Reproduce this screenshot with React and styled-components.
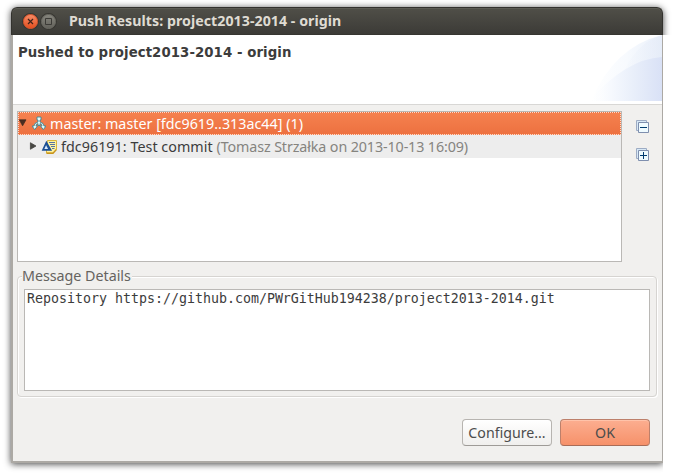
import React from 'react';
import styled, { createGlobalStyle } from 'styled-components';

const ui = '"Noto Sans", "Open Sans", sans-serif';

const GlobalStyle = createGlobalStyle`
  *, *::before, *::after { box-sizing: border-box; }
  html, body { margin: 0; background: #fff; overflow: hidden; }
`;

const Desktop = styled.div`
  width: 679px;
  height: 474px;
  padding: 7px 16px 11px 11px;
  overflow: hidden;
  background: #fff;
`;

const Window = styled.main`
  height: 456px;
  width: 652px;
  display: flex;
  flex-direction: column;
  border-radius: 6px 6px 0 0;
  box-shadow: 0 1px 7px rgba(0, 0, 0, 0.75);
  clip-path: polygon(-11px -7px, 668px -7px, 668px 28px, 652px 28px, 652px 467px, -11px 467px);
`;

const TitleBar = styled.header`
  height: 28px;
  flex: none;
  display: flex;
  align-items: center;
  padding-left: 11px;
  border: 1px solid #33322e;
  border-bottom-color: #373631;
  border-radius: 6px 6px 0 0;
  background: linear-gradient(#504f48, #3c3b37);
  box-shadow: inset 0 1px 0 #5c5b54;
`;

const WindowButton = styled.span`
  display: flex;
  width: 15px;
  height: 15px;
  margin-right: 3px;
  border-radius: 50%;
  border: 1px solid ${(p) => (p.$close ? '#e2572c' : '#6b6a63')};
  background: ${(p) => (p.$close ? 'linear-gradient(#f58a66, #e4501f)' : 'linear-gradient(#85847c, #64635c)')};
  box-shadow: 0 0 0 1px #383732;
  svg { display: block; }
`;

const Title = styled.h1`
  margin: 0 0 0 10px;
  font: 700 14.2px/20px ${ui};
  letter-spacing: 0.04px;
  color: #dfdbd2;
  white-space: nowrap;
`;

const Content = styled.div`
  flex: 1;
  display: flex;
  flex-direction: column;
  border: solid #aca9a4;
  border-width: 0 1px 2px 2px;
  background: #f1f0ee;
`;

const Banner = styled.section`
  height: 70px;
  flex: none;
  display: flex;
  justify-content: space-between;
  border-bottom: 1px solid #d8d7d5;
  background: #fff;
  svg { display: block; flex: none; }
`;

const Heading = styled.h2`
  margin: 8px 0 0 5px;
  font: 700 13.3px/20px "DejaVu Sans", sans-serif;
  letter-spacing: 0.07px;
  color: #3c3c3c;
  white-space: nowrap;
`;

const Results = styled.section`
  display: flex;
  margin: 6px 0 0 4px;
`;

const Tree = styled.div`
  width: 605px;
  height: 151px;
  border: 1px solid #bab8b5;
  background: #fff;
`;

const TreeRow = styled.div`
  display: flex;
  align-items: center;
  height: 23px;
  padding-left: ${(p) => (p.$child ? '10px' : '0')};
  font: 14.3px/22px ${ui};
  white-space: pre;
  color: ${(p) => (p.$selected ? '#fff' : '#3c3c3c')};
  background: ${(p) => (p.$selected ? 'linear-gradient(#f5814f, #ed7140)' : '#ededed')};
  border: ${(p) => (p.$selected ? '1px dotted #ffd9c8' : '0')};
  svg { flex: none; }
`;

const Label = styled.span`
  letter-spacing: ${(p) => p.$spacing || 0};
  color: ${(p) => (p.$muted ? '#85847f' : 'inherit')};
  margin-left: ${(p) => p.$gap || 0};
`;

const Tools = styled.div`
  display: flex;
  flex-direction: column;
  gap: 15px;
  padding: 9px 0 0 14px;
  svg { display: block; }
`;

const Details = styled.fieldset`
  width: 638px;
  height: 131px;
  margin: 4px 0 0 4px;
  padding: 0 6px;
  border: 1px solid #d6d4d1;
  border-radius: 4px;
  box-shadow: inset 1px 1px 0 #fff, 1px 1px 0 #fff;
`;

const Legend = styled.legend`
  margin-left: -2px;
  padding: 0 1px 1px 0;
  font: 14.3px/19px ${ui};
  letter-spacing: -0.03px;
  color: #65635f;
  background: #f1f0ee;
`;

const Message = styled.div`
  width: 626px;
  height: 102px;
  margin-top: 3px;
  padding: 0 2px;
  border: 1px solid #bab8b5;
  background: #fff;
  font: 13.29px/17px "DejaVu Sans Mono", monospace;
  color: #3c3c3c;
  white-space: pre;
`;

const Actions = styled.footer`
  display: flex;
  justify-content: flex-end;
  gap: 8px;
  margin: 22px 12px 0 0;
`;

const Button = styled.button`
  width: 90px;
  height: 27px;
  padding: 0;
  border: 1px solid ${(p) => (p.$primary ? '#bd806b' : '#b7b4b0')};
  border-bottom-color: ${(p) => (p.$primary ? '#a86c57' : '#9e9b97')};
  border-radius: 4px;
  background: ${(p) => (p.$primary ? 'linear-gradient(#fcae90, #f6916a)' : 'linear-gradient(#ffffff, #f0efed)')};
  box-shadow: inset 0 1px 0 ${(p) => (p.$primary ? '#ffc3aa' : '#fff')};
  font: 14.2px/24px ${ui};
  color: #4c4c4c;
  white-space: nowrap;
`;

const BannerArt = () => (
  <svg width="76" height="66" viewBox="0 0 76 66">
    <defs>
      <linearGradient id="arc"><stop offset="0" stopColor="#fff" /><stop offset=".5" stopColor="#f7fafe" /><stop offset="1" stopColor="#eaf0fa" /></linearGradient>
      <linearGradient id="arc2"><stop offset="0" stopColor="#f0f5fc" stopOpacity="0" /><stop offset="1" stopColor="#e2e9f7" /></linearGradient>
      <linearGradient id="disc"><stop offset="0" stopColor="#fff" stopOpacity="0" /><stop offset=".3" stopColor="#f6f9fe" /><stop offset=".6" stopColor="#e9effa" /><stop offset="1" stopColor="#d9e1f6" /></linearGradient>
    </defs>
    <path d="M5 66Q28 12 76 0V66Z" fill="url(#arc)" />
    <path d="M28 66Q41 10 76 0V66Z" fill="url(#arc2)" opacity=".6" />
    <path d="M3 66Q40 24 76 22V66Z" fill="url(#disc)" />
  </svg>
);

const CloseGlyph = () => (
  <svg width="13" height="13"><path d="M4 4l5 5M9 4l-5 5" stroke="#40231a" strokeWidth="1.2" /></svg>
);

const MaximizeGlyph = () => (
  <svg width="13" height="13"><path d="M3.5 3.5h6v6h-6z" fill="none" stroke="#3c3b37" /></svg>
);

const Arrow = ({ open }) => (
  <svg width="13" height="12" viewBox="0 0 13 12">
    {open
      ? <path d="M.3 1.8H7L3.6 7.8Z" fill="#4c2d20" stroke="#3c2a20" strokeWidth=".7" />
      : <path d="M2.4 1.7V8.3L8 5Z" fill="#484844" stroke="#3c3b37" strokeWidth=".7" />}
  </svg>
);

const BranchIcon = () => (
  <svg width="14" height="15" viewBox="0 0 14 15">
    <path d="M5 1H9V4H8V6Q12 7 12 10H14L11.3 13.6L8.5 10H10Q10 8 8 7.6V9.5H6V7.6Q4 8 4 10H5.5L2.7 13.6L0 10H2Q2 7 6 6V4H5Z" fill="#e2fafa" stroke="#3f8795" strokeWidth=".9" strokeLinejoin="round" />
  </svg>
);

const CommitIcon = () => (
  <svg width="16" height="16" viewBox="0 0 16 16">
    <path d="M6.5 1.5H15.5V10.5L12 14H5.5V10Z" fill="#fff3a0" stroke="#d8b43c" />
    <path d="M5.5 14.3H12L15.4 10.5" fill="none" stroke="#c9951c" strokeWidth="1.4" />
    <path d="M8 3.5H14M9 5.5H14M10 7.5H14M11 9.5H13.5" stroke="#5873a0" />
    <path d="M2 10.8L5.4 3.5L9.6 10.8Z" fill="#dceafa" stroke="#1b4f94" strokeWidth="1.7" />
    <path d="M5.2 5L7.8 10" stroke="#1b4f94" strokeWidth="1.3" />
  </svg>
);

const TreeTool = ({ expand }) => (
  <svg width="13" height="13" viewBox="0 0 13 13">
    <path d="M.5 .5H10.5V10.5H.5Z" fill="#d8e9f6" stroke="#9eacc4" />
    <path d="M2.5 2.5H12.5V12.5H2.5Z" fill="#effbff" stroke="#7f8fae" />
    <path d={expand ? 'M4 7.5H11M7.5 4V11' : 'M4 7.5H11'} stroke="#003b6f" />
  </svg>
);

export default function App() {
  return (
    <>
      <GlobalStyle />
      <Desktop>
        <Window>
          <TitleBar>
            <WindowButton $close><CloseGlyph /></WindowButton>
            <WindowButton><MaximizeGlyph /></WindowButton>
            <Title>Push Results: project2013-2014 - origin</Title>
          </TitleBar>
          <Content>
            <Banner>
              <Heading>Pushed to project2013-2014 - origin</Heading>
              <BannerArt />
            </Banner>
            <Results>
              <Tree>
                <TreeRow $selected>
                  <Arrow open />
                  <BranchIcon />
                  <Label $gap="4px" $spacing="0.01px">master: master [fdc9619..313ac44] (1)</Label>
                </TreeRow>
                <TreeRow $child>
                  <Arrow />
                  <CommitIcon />
                  <Label $gap="4px" $spacing="0.04px">fdc96191: Test commit </Label>
                  <Label $muted $spacing="-0.11px">(Tomasz Strzałka on 2013-10-13 16:09)</Label>
                </TreeRow>
              </Tree>
              <Tools>
                <TreeTool />
                <TreeTool expand />
              </Tools>
            </Results>
            <Details>
              <Legend>Message Details</Legend>
              <Message>Repository https://github.com/PWrGitHub194238/project2013-2014.git</Message>
            </Details>
            <Actions>
              <Button>Configure...</Button>
              <Button $primary>OK</Button>
            </Actions>
          </Content>
        </Window>
      </Desktop>
    </>
  );
}
